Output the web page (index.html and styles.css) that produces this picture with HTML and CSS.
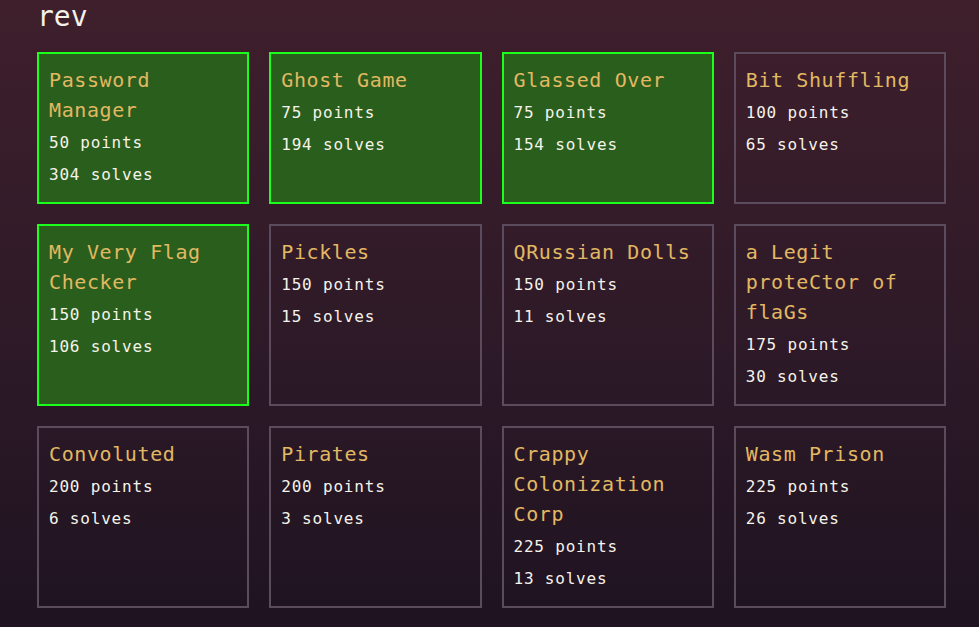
FILE: index.html
```html
<!DOCTYPE html>
<html>
<head>
<meta charset="utf-8">
<link rel="stylesheet" href="styles.css">
</head>
<body>
<h2 class="cat">rev</h2>
<div class="grid">
  <div class="card solved"><div class="name">Password Manager</div><div class="info">50 points</div><div class="info">304 solves</div></div>
  <div class="card solved"><div class="name">Ghost Game</div><div class="info">75 points</div><div class="info">194 solves</div></div>
  <div class="card solved"><div class="name">Glassed Over</div><div class="info">75 points</div><div class="info">154 solves</div></div>
  <div class="card"><div class="name">Bit Shuffling</div><div class="info">100 points</div><div class="info">65 solves</div></div>
  <div class="card solved"><div class="name">My Very Flag Checker</div><div class="info">150 points</div><div class="info">106 solves</div></div>
  <div class="card"><div class="name">Pickles</div><div class="info">150 points</div><div class="info">15 solves</div></div>
  <div class="card"><div class="name">QRussian Dolls</div><div class="info">150 points</div><div class="info">11 solves</div></div>
  <div class="card"><div class="name">a Legit proteCtor of flaGs</div><div class="info">175 points</div><div class="info">30 solves</div></div>
  <div class="card"><div class="name">Convoluted</div><div class="info">200 points</div><div class="info">6 solves</div></div>
  <div class="card"><div class="name">Pirates</div><div class="info">200 points</div><div class="info">3 solves</div></div>
  <div class="card"><div class="name">Crappy Colonization Corp</div><div class="info">225 points</div><div class="info">13 solves</div></div>
  <div class="card"><div class="name">Wasm Prison</div><div class="info">225 points</div><div class="info">26 solves</div></div>
</div>
</body>
</html>
```
FILE: styles.css
```css
html, body {
  margin: 0;
  height: 100%;
}
body {
  background: linear-gradient(180deg, #3f1f2c 0%, #2f1a28 50%, #1f1321 100%);
  font-family: "DejaVu Sans Mono", "Liberation Mono", monospace;
  padding: 0 33px 0 37px;
  box-sizing: border-box;
  overflow: hidden;
}
.cat {
  margin: 0;
  padding-top: 2px;
  font-size: 28px;
  line-height: 30px;
  font-weight: normal;
  color: #f4f1ea;
}
.grid {
  margin-top: 20px;
  display: grid;
  grid-template-columns: repeat(4, 1fr);
  gap: 20px;
}
.card {
  border: 2px solid #5c4b5c;
  padding: 11px 10px 11px 10px;
}
.card.solved {
  background: #2a5e1d;
  border-color: #1cff1c;
}
.name {
  color: #e2b862;
  font-size: 20px;
  line-height: 30px;
  letter-spacing: 0.6px;
  margin-bottom: 2px;
}
.info {
  color: #f5f3ea;
  font-size: 16px;
  line-height: 32px;
  letter-spacing: 0.8px;
}
```
